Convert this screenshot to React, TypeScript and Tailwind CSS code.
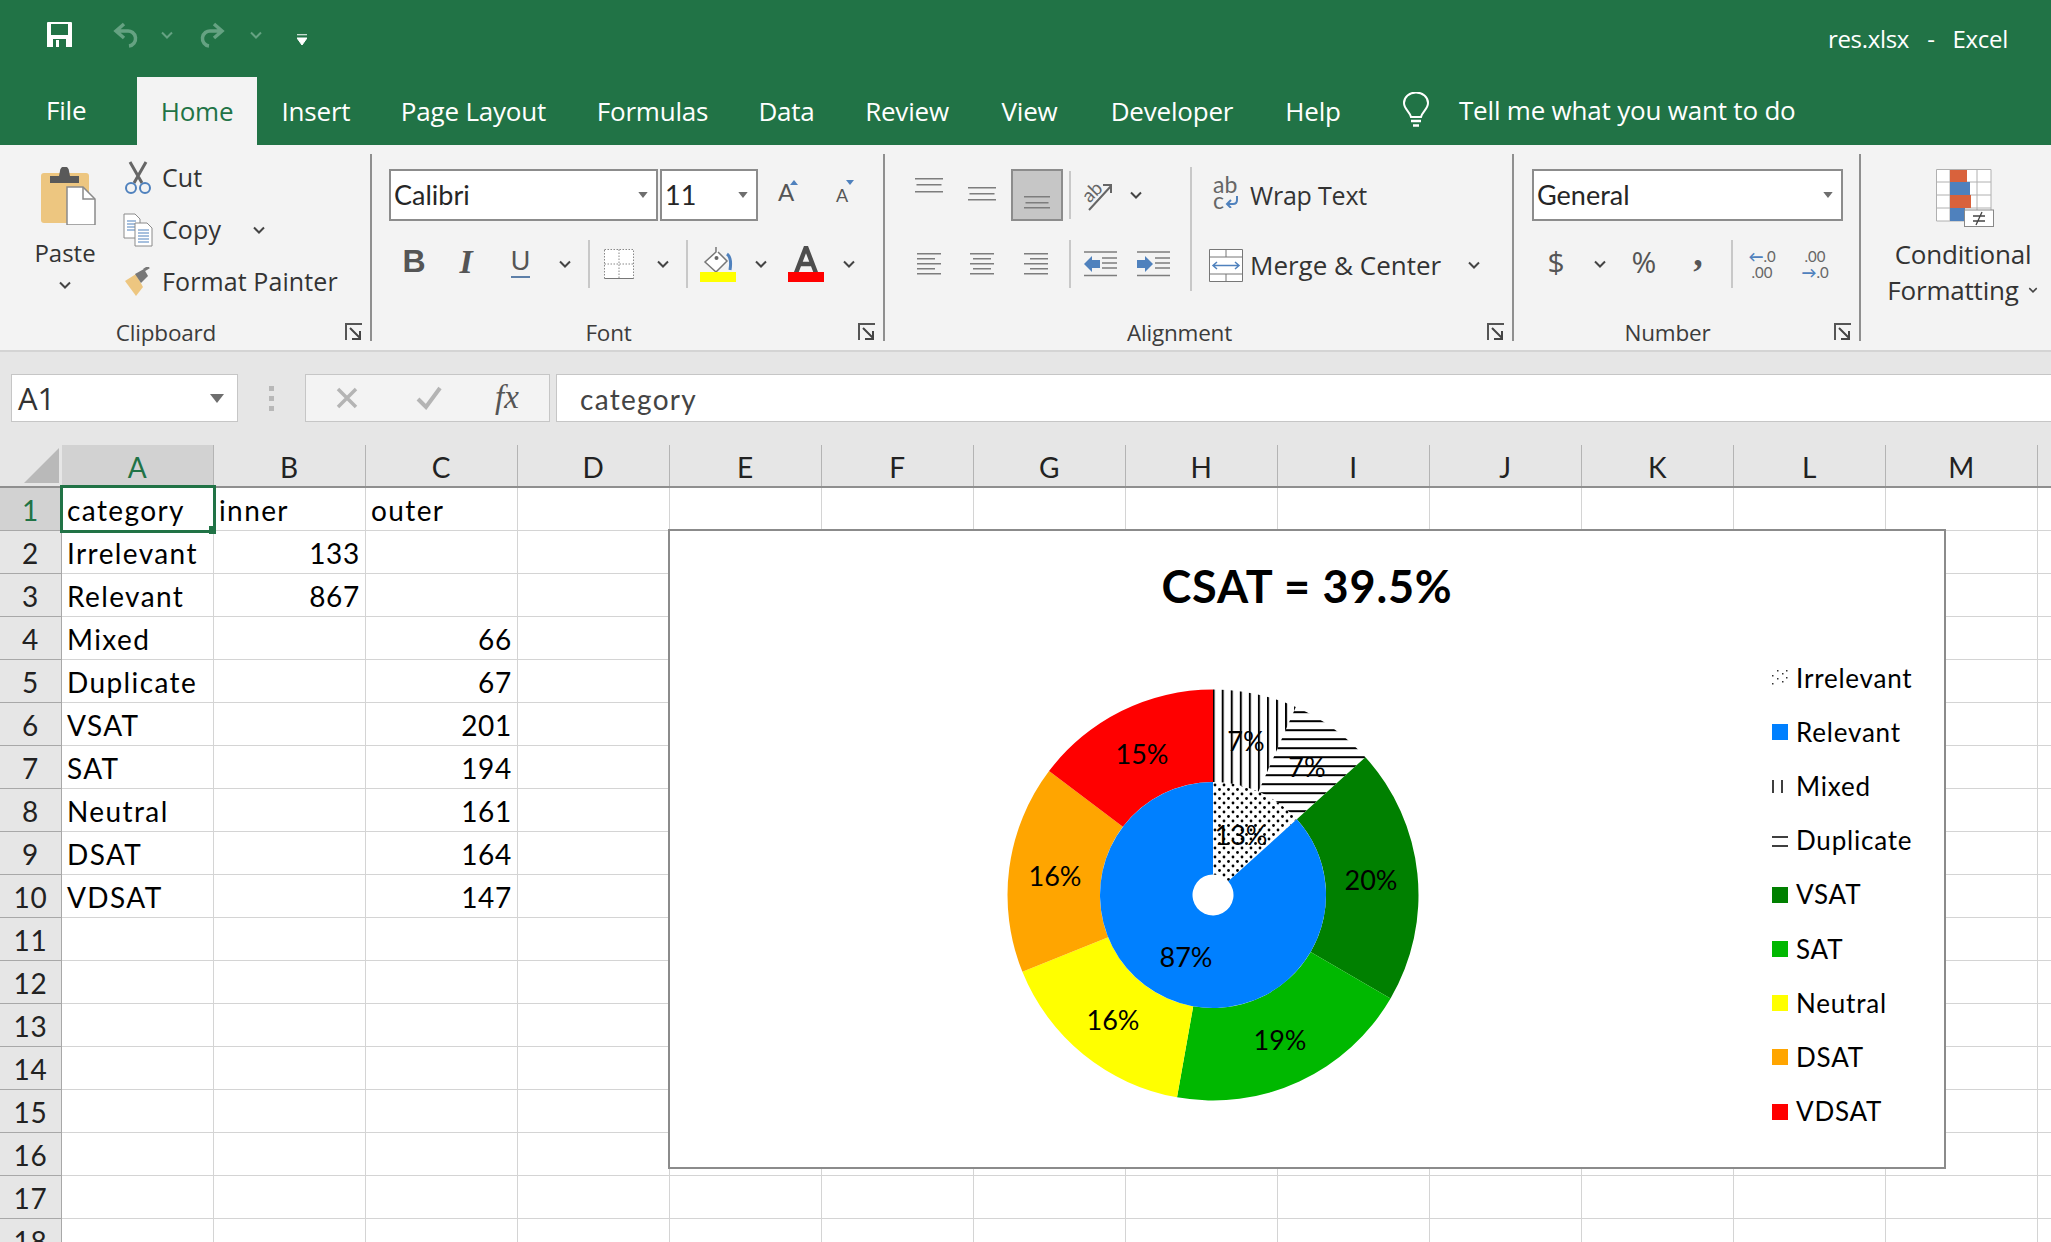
import type { ReactNode } from 'react';

const ui = "font-['Open_Sans','Noto_Sans',sans-serif]";
const calibri = "font-['Lato','Liberation_Sans',sans-serif]";

const tabs: [string, string][] = [
  ['Insert', 'w-[118px]'],
  ['Page Layout', 'w-[197px]'],
  ['Formulas', 'w-[161px]'],
  ['Data', 'w-[107px]'],
  ['Review', 'w-[134px]'],
  ['View', 'w-[111px]'],
  ['Developer', 'w-[174px]'],
  ['Help', 'w-[108px]'],
];

const columns = ['A', 'B', 'C', 'D', 'E', 'F', 'G', 'H', 'I', 'J', 'K', 'L', 'M', 'N'];

const rows: [string, string, string][] = [
  ['category', 'inner', 'outer'],
  ['Irrelevant', '133', ''],
  ['Relevant', '867', ''],
  ['Mixed', '', '66'],
  ['Duplicate', '', '67'],
  ['VSAT', '', '201'],
  ['SAT', '', '194'],
  ['Neutral', '', '161'],
  ['DSAT', '', '164'],
  ['VDSAT', '', '147'],
];

const outerRing = [
  { value: 66, fill: 'url(#mixed)' },
  { value: 67, fill: 'url(#duplicate)' },
  { value: 201, fill: '#008000' },
  { value: 194, fill: '#00b800' },
  { value: 161, fill: '#ffff00' },
  { value: 164, fill: '#ffa500' },
  { value: 147, fill: '#ff0000' },
];

const innerRing = [
  { value: 133, fill: 'url(#dots)' },
  { value: 867, fill: '#0080ff' },
];

const labels: [string, number, number][] = [
  ['15%', 137, 66],
  ['16%', 50, 188],
  ['7%', 241, 53],
  ['7%', 302, 79],
  ['13%', 236, 147],
  ['20%', 366, 192],
  ['87%', 181, 269],
  ['19%', 275, 352],
  ['16%', 108, 332],
];

const legend = [
  { name: 'Irrelevant', swatch: 'dots' },
  { name: 'Relevant', swatch: '#0080ff' },
  { name: 'Mixed', swatch: 'mixed' },
  { name: 'Duplicate', swatch: 'duplicate' },
  { name: 'VSAT', swatch: '#008000' },
  { name: 'SAT', swatch: '#00b800' },
  { name: 'Neutral', swatch: '#ffff00' },
  { name: 'DSAT', swatch: '#ffa500' },
  { name: 'VDSAT', swatch: '#ff0000' },
];

function ringPaths(data: { value: number; fill: string }[], r0: number, r1: number) {
  const total = data.reduce((s, d) => s + d.value, 0);
  let angle = 0;
  return data.map((d) => {
    const a0 = angle;
    const a1 = angle + (d.value / total) * Math.PI * 2;
    angle = a1;
    const pt = (r: number, a: number) => `${208 + r * Math.sin(a)} ${208 - r * Math.cos(a)}`;
    const big = a1 - a0 > Math.PI ? 1 : 0;
    return {
      fill: d.fill,
      d: `M${pt(r1, a0)} A${r1} ${r1} 0 ${big} 1 ${pt(r1, a1)} L${pt(r0, a1)} A${r0} ${r0} 0 ${big} 0 ${pt(r0, a0)} Z`,
    };
  });
}

const Chevron = ({ className = '' }: { className?: string }) => (
  <svg width="12" height="8" viewBox="0 0 12 8" className={className}>
    <path d="M1 1.5 6 6.5 11 1.5" fill="none" stroke="#444" strokeWidth="2" />
  </svg>
);

const Caret = ({ big }: { big?: boolean }) => (
  <svg width={big ? 14 : 10} height={big ? 9 : 6} viewBox="0 0 11 7">
    <path d="M0 0H11L5.5 7Z" fill="#6e6e6e" />
  </svg>
);

const Launcher = () => (
  <svg width="18" height="18" viewBox="0 0 18 18" className="absolute right-[7px] bottom-0">
    <path d="M1 17V1H17" fill="none" stroke="#555" strokeWidth="2" />
    <path d="M5 5 15 15M15 8V16H7" fill="none" stroke="#444" strokeWidth="2" />
  </svg>
);

const Slot = ({ w, children }: { w: string; children?: ReactNode }) => (
  <div className={`flex h-full shrink-0 items-center justify-center ${w}`}>{children}</div>
);

const VDivider = ({ h = 'h-[48px]' }: { h?: string }) => <div className={`w-[2px] bg-[#c8c8c8] ${h}`} />;

const Lines = ({ widths, ys, align, w = 28, h = 36 }: { widths: number[]; ys: number[]; align: 'l' | 'c' | 'r'; w?: number; h?: number }) => (
  <svg width={w} height={h} viewBox={`0 0 ${w} ${h}`}>
    {widths.map((lw, i) => {
      const x = align === 'l' ? 0 : align === 'c' ? (w - lw) / 2 : w - lw;
      return <rect key={i} x={x} y={ys[i]} width={lw} height="1.5" fill="#7d7d7d" />;
    })}
  </svg>
);

const SelectBox = ({ w, text }: { w: string; text: string }) => (
  <div className={`flex h-[52px] items-center justify-between border-2 border-[#8c8c8c] bg-white pl-[3px] pr-[8px] ${w}`}>
    <span className={`${calibri} pt-[1px] text-[27px] text-[#262626]`}>{text}</span>
    <Caret />
  </div>
);

const Group = ({ w, label, launcher, children }: { w: string; label?: string; launcher?: boolean; children: ReactNode }) => (
  <div className={`relative flex h-full shrink-0 flex-col ${w}`}>
    <div className="min-h-0 flex-1">{children}</div>
    {label && <div className="h-[14px] pr-[38px] text-center text-[22.5px] leading-[12px] tracking-[-0.2px] text-[#3c3c3c]">{label}</div>}
    {launcher && <Launcher />}
  </div>
);

const Separator = () => <div className="h-full w-[2px] shrink-0 bg-[#8f8f8f]" />;

const ActionRow = ({ icon, label, chevron }: { icon: ReactNode; label: string; chevron?: boolean }) => (
  <div className="flex h-[52px] items-center">
    <div className="flex w-[40px] justify-center">{icon}</div>
    <span className="ml-[4px] text-[25px] tracking-[0.1px] text-[#333]">{label}</span>
    {chevron && <Chevron className="ml-[32px]" />}
  </div>
);

const ClipboardIcon = () => (
  <svg width="56" height="58" viewBox="0 0 56 58" className="ml-[6px]">
    <rect x="1" y="6" width="48" height="50" rx="3" fill="#edc680" />
    <path d="M10 9h9l1-5a4 4 0 0 1 9 0l1 5h9v7H10Z" fill="#595959" />
    <path d="M27 22H43L55 34V60H27Z" transform="translate(0 -2)" fill="#fff" stroke="#8a8a8a" strokeWidth="1.5" />
    <path d="M43 20V32H55" fill="none" stroke="#8a8a8a" strokeWidth="1.5" />
  </svg>
);

const ScissorsIcon = () => (
  <svg width="30" height="34" viewBox="0 0 30 34">
    <path d="M7 1 19 22M23 1 11 22" stroke="#666" strokeWidth="3" fill="none" />
    <circle cx="8" cy="27" r="5" fill="none" stroke="#4f81bd" strokeWidth="2" />
    <circle cx="22" cy="27" r="5" fill="none" stroke="#4f81bd" strokeWidth="2" />
  </svg>
);

const CopyIcon = () => (
  <svg width="30" height="34" viewBox="0 0 30 34">
    <path d="M1 1H12L17 6V25H1Z" fill="#fff" stroke="#8a8a8a" />
    <path d="M4 8H13M4 11H13M4 14H13M4 17H13" stroke="#4f81bd" />
    <path d="M12 10H24L29 15V33H12Z" fill="#fff" stroke="#8a8a8a" />
    <path d="M15 17H26M15 20H26M15 23H26M15 26H26M15 29H26" stroke="#4f81bd" />
  </svg>
);

const PainterIcon = () => (
  <svg width="28" height="30" viewBox="0 0 28 30">
    <path d="M1 14 12 7 19 20 12 29Z" fill="#edc680" />
    <path d="M11 7 20 2 24 9 17 16Z" fill="#777" />
    <path d="M20 3 25 0" stroke="#777" strokeWidth="3" />
  </svg>
);

const BordersIcon = () => (
  <svg width="30" height="30" viewBox="0 0 30 30">
    <path d="M.5.5H29.5V29.5H.5ZM15 .5V29.5M.5 15H29.5" fill="#fff" stroke="#888" strokeDasharray="1.5 1.5" />
    <path d="M.5 29.5H29.5" stroke="#777" />
  </svg>
);

const FillIcon = () => (
  <svg width="36" height="36" viewBox="0 0 36 36">
    <path d="M16 1 16 6 5 16 16 26 27 15 18 6" fill="#fff" stroke="#777" strokeWidth="1.5" />
    <path d="M27 8C31 11 31 18 30 24" fill="none" stroke="#4f81bd" strokeWidth="3" />
    <circle cx="16.5" cy="12" r="2" fill="#666" />
    <rect y="26" width="36" height="10" fill="#ffff00" />
  </svg>
);

const FontColorIcon = () => (
  <svg width="36" height="36" viewBox="0 0 36 36">
    <path d="M8 27 18 1 28 27M11 18H25" fill="none" stroke="#4d4d4d" strokeWidth="4.5" />
    <rect y="26" width="36" height="10" fill="#ff0000" />
  </svg>
);

const GrowFont = ({ grow }: { grow?: boolean }) => (
  <div className="relative flex h-[30px] w-[28px] items-end justify-center pb-[6px]">
    <span className={`${calibri} leading-none text-[#555] ${grow ? 'text-[24px]' : 'text-[18px]'}`}>A</span>
    <svg width="8" height="5" viewBox="0 0 8 5" className="absolute top-0 right-[2px]">
      <path d={grow ? 'M0 5H8L4 0Z' : 'M0 0H8L4 5Z'} fill="#4f81bd" />
    </svg>
  </div>
);

const OrientationIcon = () => (
  <svg width="30" height="34" viewBox="0 0 30 34" className="-ml-[5px] -mt-[3px]">
    <path d="M6 33 28 9M20 8H28V16" fill="none" stroke="#666" strokeWidth="2" />
    <text x="0" y="21" fontSize="19" fill="#666" transform="rotate(-45 10 16)" fontFamily="Lato">ab</text>
  </svg>
);

const Indent = ({ right }: { right?: boolean }) => (
  <svg width="33" height="26" viewBox="0 0 33 26">
    <path d="M0 1H33M18 7H33M18 12H33M18 17H33M0 24.5H33" stroke="#7d7d7d" strokeWidth="1.5" />
    <path d={right ? 'M16 13 8 5V9H0V17H8V21Z' : 'M0 13 8 5V9H16V17H8V21Z'} fill="#4f81bd" />
  </svg>
);

const WrapIcon = () => (
  <div className={`relative -mt-[6px] h-[32px] w-[26px] ${calibri} text-[#666]`}>
    <span className="absolute top-[-5px] left-0 text-[23px] leading-[24px]">ab</span>
    <span className="absolute top-[11px] left-0 text-[23px] leading-[24px]">c</span>
    <svg width="14" height="12" viewBox="0 0 14 12" className="absolute top-[19px] left-[12px]">
      <path d="M12 0V4Q12 8 8 8H2M6 4 2 8 6 12" fill="none" stroke="#4f81bd" strokeWidth="2" />
    </svg>
  </div>
);

const MergeIcon = () => (
  <svg width="34" height="33" viewBox="0 0 34 33">
    <path d="M.5.5H33.5V32.5H.5ZM.5 8H33.5M.5 25H33.5M17 .5V8M17 25V32.5" fill="#fff" stroke="#777" />
    <path d="M4 16.5H30M8 13 4 16.5 8 20M26 13 30 16.5 26 20" fill="none" stroke="#4f81bd" strokeWidth="1.5" />
  </svg>
);

const ConditionalIcon = () => (
  <svg width="58" height="58" viewBox="0 0 58 58" className="ml-[4px]">
    <path d="M.5.5H55V52H.5ZM14 .5V52M27 .5V52M41 .5V52M.5 13H55M.5 26H55M.5 39H55" fill="#fff" stroke="#b0b0b0" />
    <rect x="14" y="1" width="17" height="12" fill="#d9623c" />
    <rect x="14" y="13" width="20" height="13" fill="#4f81bd" />
    <rect x="14" y="26" width="21" height="13" fill="#d9623c" />
    <rect x="14" y="39" width="15" height="13" fill="#4f81bd" />
    <rect x="28.5" y="41" width="29" height="16.5" fill="#fff" stroke="#888" />
    <path d="M37 47H49M37 52H49M46 43 40 56" stroke="#444" strokeWidth="1.3" fill="none" />
  </svg>
);

const Pie = () => (
  <svg width="416" height="416" viewBox="0 0 416 416" className="shrink-0 overflow-visible">
    <defs>
      <pattern id="mixed" width="9.05" height="9.05" patternUnits="userSpaceOnUse" patternTransform="translate(216.7 0)">
        <rect width="2" height="9.05" fill="#000" />
      </pattern>
      <pattern id="duplicate" width="9" height="9" patternUnits="userSpaceOnUse" patternTransform="translate(0 24.2)">
        <rect width="9" height="2" fill="#000" />
      </pattern>
      <pattern id="dots" width="9" height="9" patternUnits="userSpaceOnUse" patternTransform="translate(208 96)">
        <circle cx="2" cy="2" r="1.4" fill="#000" />
        <circle cx="6.5" cy="6.5" r="1.4" fill="#000" />
      </pattern>
    </defs>
    {ringPaths(outerRing, 113, 205.5).map((p, i) => <path key={i} d={p.d} fill={p.fill} />)}
    {ringPaths(innerRing, 20.5, 113).map((p, i) => <path key={i} d={p.d} fill={p.fill} />)}
    {labels.map(([t, x, y], i) => (
      <text key={i} x={x} y={y} textAnchor="middle" dominantBaseline="central" fontSize="27" fontFamily="Lato" fill="#000">{t}</text>
    ))}
  </svg>
);

const Swatch = ({ kind }: { kind: string }) => {
  if (kind === 'dots')
    return (
      <svg width="16" height="16" viewBox="0 0 16 16">
        {[[1, 14], [6, 9], [11, 4], [15, 1], [6, 1], [11, 12], [15, 8], [1, 6]].map(([x, y], i) => <rect key={i} x={x - 1} y={y - 1} width="1.5" height="1.5" fill="#333" />)}
      </svg>
    );
  if (kind === 'mixed')
    return (
      <svg width="16" height="16" viewBox="0 0 16 16">
        <path d="M1 2V15M10 2V15" stroke="#000" strokeWidth="1.5" />
      </svg>
    );
  if (kind === 'duplicate')
    return (
      <svg width="16" height="16" viewBox="0 0 16 16">
        <path d="M0 4H16M0 13H16" stroke="#000" strokeWidth="1.5" />
      </svg>
    );
  return <div className="h-[16px] w-[16px]" style={{ backgroundColor: kind }} />;
};

export default function App() {
  return (
    <div className={`h-[1242px] w-[2051px] overflow-hidden bg-[#e6e6e6] ${ui}`}>
      {/* Title bar */}
      <div className="flex h-[77px] items-center bg-[#217346] text-white">
        <div className="flex items-center pl-[47px] pb-[8px]">
          <svg width="25" height="25" viewBox="0 0 25 25">
            <path d="M0 1Q0 0 1 0H24Q25 0 25 1V25H0Z" fill="#fff" />
            <rect x="4" y="2" width="17" height="11" fill="#217346" />
            <rect x="6" y="17" width="13" height="8" fill="#217346" />
            <rect x="9" y="18" width="3" height="7" fill="#fff" />
          </svg>
          <svg width="26" height="26" viewBox="0 0 26 26" className="ml-[40px]">
            <path d="M12 2 4 9 12 16M4 9H15A7.5 7.5 0 0 1 17 24" fill="none" stroke="#65a282" strokeWidth="3.5" />
          </svg>
          <svg width="12" height="8" viewBox="0 0 12 8" className="ml-[23px]">
            <path d="M1 1.5 6 6.5 11 1.5" fill="none" stroke="#65a282" strokeWidth="2" />
          </svg>
          <svg width="26" height="26" viewBox="0 0 26 26" className="ml-[27px]">
            <path d="M14 2 22 9 14 16M22 9H11A7.5 7.5 0 0 0 9 24" fill="none" stroke="#65a282" strokeWidth="3.5" />
          </svg>
          <svg width="12" height="8" viewBox="0 0 12 8" className="ml-[24px]">
            <path d="M1 1.5 6 6.5 11 1.5" fill="none" stroke="#65a282" strokeWidth="2" />
          </svg>
          <svg width="10" height="11" viewBox="0 0 10 11" className="ml-[35px] mt-[10px]">
            <path d="M0 .75H10M0 4H10L5 11Z" stroke="#fff" strokeWidth="1" fill="#fff" />
          </svg>
        </div>
        <div className="ml-auto flex pr-[43px] text-[24px] tracking-[-0.3px]">
          <span>res.xlsx</span>
          <span className="ml-[18px]">-</span>
          <span className="ml-[18px]">Excel</span>
        </div>
      </div>

      {/* Tabs */}
      <div className="flex h-[68px] items-stretch bg-[#217346] text-[26px] tracking-[-0.2px] text-white">
        <div className="flex w-[137px] items-center pl-[46px] pb-[2px]">File</div>
        <div className="flex w-[120px] items-center justify-center bg-[#f3f3f3] text-[#217346]">Home</div>
        {tabs.map(([name, w]) => (
          <div key={name} className={`flex items-center justify-center ${w}`}>{name}</div>
        ))}
        <div className="ml-[36px] flex items-center pb-[2px]">
          <svg width="26" height="36" viewBox="0 0 26 36">
            <path d="M8 25C7 20 1 17 1 11A12 10.5 0 0 1 25 11C25 17 19 20 18 25Z" fill="none" stroke="#fff" strokeWidth="2" />
            <path d="M8 29H18M10 33.5H16" stroke="#fff" strokeWidth="2.5" />
          </svg>
          <span className="ml-[30px]">Tell me what you want to do</span>
        </div>
      </div>

      {/* Ribbon */}
      <div className="flex h-[207px] border-b-2 border-[#d4d4d4] bg-[#f3f3f3] pt-[9px] pb-[9px]">
        <Group w="w-[370px]" label="Clipboard" launcher>
          <div className="flex">
            <div className="flex w-[130px] flex-col items-center pt-[13px]">
              <ClipboardIcon />
              <span className="mt-[10px] text-[24px] leading-[36px] text-[#333]">Paste</span>
              <Chevron className="mt-[10px]" />
            </div>
            <div className="-mt-[2px] -ml-[12px] flex flex-col">
              <ActionRow icon={<ScissorsIcon />} label="Cut" />
              <ActionRow icon={<CopyIcon />} label="Copy" chevron />
              <ActionRow icon={<PainterIcon />} label="Format Painter" />
            </div>
          </div>
        </Group>
        <Separator />

        <Group w="w-[511px]" label="Font" launcher>
          <div className="flex flex-col pt-[15px] pl-[17px]">
            <div className="flex items-center gap-[2px]">
              <SelectBox w="w-[269px]" text="Calibri" />
              <SelectBox w="w-[98px]" text="11" />
              <Slot w="w-[52px]"><GrowFont grow /></Slot>
              <Slot w="w-[56px]"><GrowFont /></Slot>
            </div>
            <div className="mt-[19px] flex h-[48px] items-center">
              <Slot w="w-[50px]"><span className="pb-[6px] font-['Liberation_Sans'] text-[32px] font-bold text-[#555]">B</span></Slot>
              <Slot w="w-[54px]"><span className="pb-[6px] font-['Liberation_Serif'] text-[34px] font-bold italic text-[#555]">I</span></Slot>
              <Slot w="w-[55px]"><span className="mb-[4px] border-b-2 border-[#5d7fa8] font-['Liberation_Sans'] text-[27px] leading-[30px] text-[#555]">U</span></Slot>
              <Slot w="w-[34px]"><Chevron /></Slot>
              <Slot w="w-[14px]"><VDivider /></Slot>
              <Slot w="w-[46px]"><BordersIcon /></Slot>
              <Slot w="w-[42px]"><Chevron /></Slot>
              <Slot w="w-[6px]"><VDivider /></Slot>
              <Slot w="w-[56px]"><FillIcon /></Slot>
              <Slot w="w-[30px]"><Chevron /></Slot>
              <Slot w="w-[60px]"><FontColorIcon /></Slot>
              <Slot w="w-[26px]"><Chevron /></Slot>
            </div>
          </div>
        </Group>
        <Separator />

        <Group w="w-[627px]" label="Alignment" launcher>
          <div className="flex">
            <div className="flex w-[305px] flex-col pt-[15px] pl-[17px]">
              <div className="flex h-[52px] items-center">
                <Slot w="w-[53px]"><Lines widths={[28, 25, 28]} ys={[1, 7, 14]} align="c" /></Slot>
                <Slot w="w-[54px]"><Lines widths={[28, 25, 28]} ys={[10, 16, 22]} align="c" /></Slot>
                <div className="ml-[2px] flex h-[52px] w-[52px] items-center justify-center border-2 border-[#8c8c8c] bg-[#c6c6c6]">
                  <Lines widths={[26, 23, 26]} ys={[19, 25, 30]} align="c" />
                </div>
                <Slot w="w-[14px]"><VDivider /></Slot>
                <Slot w="w-[46px]"><OrientationIcon /></Slot>
                <Slot w="w-[26px]"><Chevron /></Slot>
              </div>
              <div className="mt-[19px] flex h-[48px] items-center">
                <Slot w="w-[53px]"><Lines widths={[24, 18, 24, 18, 24]} ys={[3, 8, 13, 18, 23]} align="l" w={24} h={28} /></Slot>
                <Slot w="w-[54px]"><Lines widths={[24, 18, 24, 18, 24]} ys={[3, 8, 13, 18, 23]} align="c" w={24} h={28} /></Slot>
                <Slot w="w-[54px]"><Lines widths={[24, 18, 24, 18, 24]} ys={[3, 8, 13, 18, 23]} align="r" w={24} h={28} /></Slot>
                <Slot w="w-[14px]"><VDivider /></Slot>
                <Slot w="w-[46px]"><Indent /></Slot>
                <Slot w="w-[7px]" />
                <Slot w="w-[46px]"><Indent right /></Slot>
              </div>
            </div>
            <div className="mt-[13px] h-[124px] w-[2px] bg-[#c8c8c8]" />
            <div className="flex flex-col pt-[22px] pl-[16px]">
              <div className="flex h-[40px] items-center">
                <div className="flex w-[36px] justify-center"><WrapIcon /></div>
                <span className="ml-[6px] text-[25px] tracking-[-0.2px] text-[#333]">Wrap Text</span>
              </div>
              <div className="mt-[29px] flex h-[40px] items-center">
                <div className="flex w-[36px] justify-center"><MergeIcon /></div>
                <span className="ml-[6px] text-[26px] text-[#333]">Merge &amp; Center</span>
                <Chevron className="ml-[27px]" />
              </div>
            </div>
          </div>
        </Group>
        <Separator />

        <Group w="w-[345px]" label="Number" launcher>
          <div className="flex flex-col pt-[15px] pl-[18px]">
            <SelectBox w="w-[311px]" text="General" />
            <div className="mt-[19px] flex h-[48px] items-center">
              <Slot w="w-[48px]"><span className="pb-[6px] text-[30px] text-[#555]">$</span></Slot>
              <Slot w="w-[40px]"><Chevron /></Slot>
              <Slot w="w-[48px]"><span className="pb-[6px] text-[30px] text-[#555]">%</span></Slot>
              <Slot w="w-[60px]"><span className="pb-[22px] font-['Liberation_Serif'] text-[38px] font-bold leading-[38px] text-[#555]">,</span></Slot>
              <Slot w="w-[8px]"><VDivider /></Slot>
              <Slot w="w-[52px]">
                <div className={`${calibri} flex flex-col items-center text-[15px] leading-[16px] text-[#666]`}>
                  <span><span className="font-bold text-[#4f81bd]">←</span>.0</span>
                  <span>.00</span>
                </div>
              </Slot>
              <Slot w="w-[54px]">
                <div className={`${calibri} flex flex-col items-center text-[15px] leading-[16px] text-[#666]`}>
                  <span>.00</span>
                  <span><span className="font-bold text-[#4f81bd]">→</span>.0</span>
                </div>
              </Slot>
            </div>
          </div>
        </Group>
        <Separator />

        <Group w="w-[188px]">
          <div className="flex flex-col items-center pt-[15px] pl-[16px] text-[26px] leading-[36px] tracking-[-0.2px] text-[#333]">
            <ConditionalIcon />
            <span className="mt-[9px]">Conditional</span>
            <span className="flex items-center">Formatting<Chevron className="ml-[8px] scale-75" /></span>
          </div>
        </Group>
      </div>

      {/* Formula bar */}
      <div className="flex h-[93px] items-start bg-[#e6e6e6] pt-[22px]">
        <div className="ml-[11px] flex h-[48px] w-[227px] items-center justify-between border border-[#c6c6c6] bg-white pl-[6px] pr-[13px] text-[31px] text-[#333]">
          A1
          <Caret big />
        </div>
        <div className="flex h-[48px] w-[67px] flex-col items-center justify-center gap-[5px]">
          <div className="h-[5px] w-[5px] bg-[#b8b8b8]" />
          <div className="h-[5px] w-[5px] bg-[#b8b8b8]" />
          <div className="h-[5px] w-[5px] bg-[#b8b8b8]" />
        </div>
        <div className="flex h-[48px] w-[245px] items-center border border-[#c6c6c6] bg-[#f3f3f3]">
          <Slot w="w-[82px]">
            <svg width="24" height="24" viewBox="0 0 24 24">
              <path d="M3 3 21 21M21 3 3 21" stroke="#b4b4b4" strokeWidth="3.5" />
            </svg>
          </Slot>
          <Slot w="w-[82px]">
            <svg width="26" height="24" viewBox="0 0 26 24">
              <path d="M2 13 10 21 24 2" fill="none" stroke="#b4b4b4" strokeWidth="4" />
            </svg>
          </Slot>
          <Slot w="w-[74px]">
            <span className="font-['Liberation_Serif'] text-[33px] italic text-[#555]">fx</span>
          </Slot>
        </div>
        <div className="ml-[6px] -mr-[4px] flex h-[48px] flex-1 items-center border border-[#c6c6c6] bg-white pl-[23px] pt-[2px] text-[28px] tracking-[1.3px] text-[#444]">
          <span className={calibri}>category</span>
        </div>
      </div>

      {/* Sheet */}
      <div className={`relative ${calibri} text-[28px] tracking-[0.7px] text-black`}>
        <div className="flex h-[43px] border-b-2 border-[#8f8f8f] bg-[#e6e6e6]">
          <div className="flex w-[62px] shrink-0 items-end justify-end pr-[3px] pb-[3px]">
            <svg width="35" height="35" viewBox="0 0 35 35">
              <path d="M35 0V35H0Z" fill="#b9b9b9" />
            </svg>
          </div>
          {columns.map((c, i) => (
            <div
              key={c}
              className={`flex w-[152px] shrink-0 items-center justify-center border-r border-[#b4b4b4] pt-[3px] ${i === 0 ? 'bg-[#d2d2d2] text-[#217346]' : 'text-[#222]'}`}
            >
              {c}
            </div>
          ))}
        </div>
        {Array.from({ length: 18 }, (_, r) => (
          <div key={r} className="flex h-[43px] bg-white">
            <div className={`flex w-[62px] shrink-0 items-center justify-center border-r border-b border-[#a8a8a8] pt-[2px] ${r === 0 ? 'bg-[#d2d2d2] text-[#217346]' : 'bg-[#e6e6e6] text-[#222]'}`}>
              {r + 1}
            </div>
            {columns.map((c, ci) => {
              const value = rows[r]?.[ci] ?? '';
              const numeric = /^\d+$/.test(value);
              return (
                <div
                  key={c}
                  className={`flex w-[152px] shrink-0 items-center border-r border-b border-[#d4d4d4] px-[5px] pt-[2px] ${numeric ? 'justify-end' : 'justify-start tracking-[1.4px]'}`}
                >
                  {value}
                </div>
              );
            })}
          </div>
        ))}

        {/* Selected cell */}
        <div className="absolute top-[40px] left-[60px] h-[48px] w-[156px] border-[3px] border-[#217346]">
          <div className="absolute -right-[3px] -bottom-[4px] h-[8px] w-[7px] bg-[#217346]" />
        </div>

        {/* Chart */}
        <div className="absolute top-[84px] left-[668px] h-[640px] w-[1278px] border-2 border-[#8b8b8b] bg-white tracking-normal">
          <div className="flex h-[112px] items-center justify-center text-[45px] font-bold tracking-[0.8px]">CSAT = 39.5%</div>
          <div className="flex pl-[335px]">
            <div className="mt-[44px] shrink-0"><Pie /></div>
            <div className="ml-[351px] mt-[8px] flex flex-col">
              {legend.map((l) => (
                <div key={l.name} className="flex h-[54.2px] items-center">
                  <Swatch kind={l.swatch} />
                  <span className="ml-[8px] text-[26px] tracking-[0.8px]">{l.name}</span>
                </div>
              ))}
            </div>
          </div>
        </div>
      </div>
    </div>
  );
}
